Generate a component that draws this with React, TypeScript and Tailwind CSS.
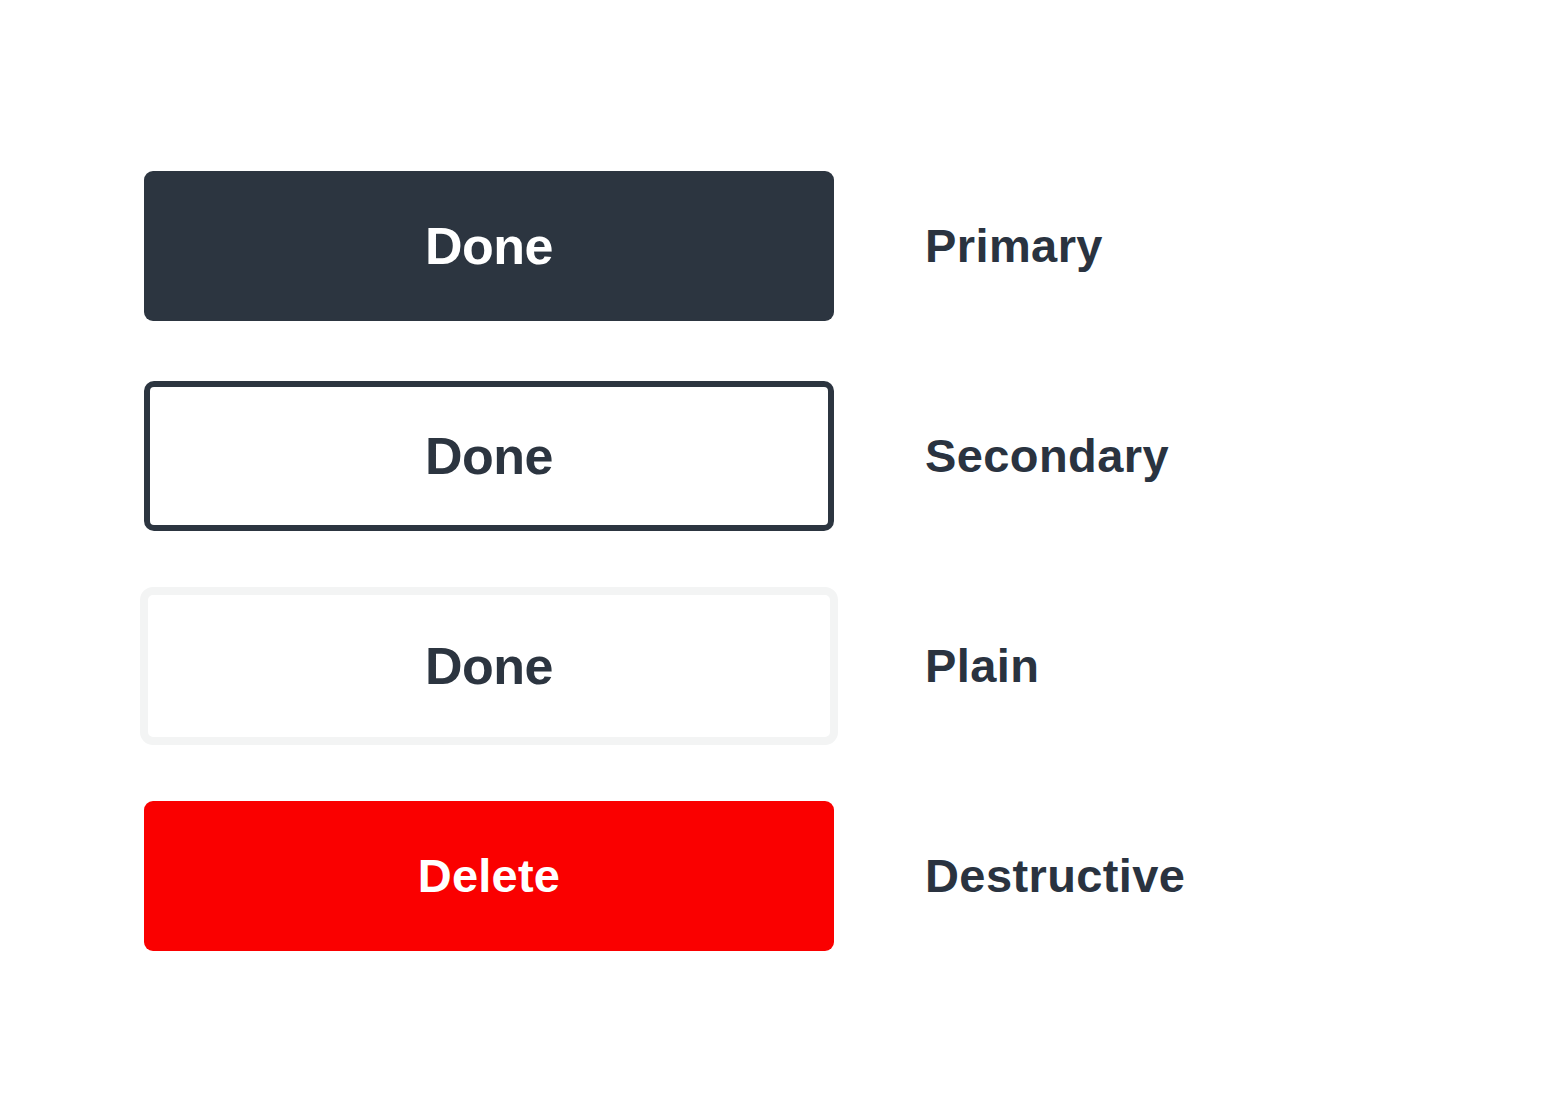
import React from 'react';

const font = { fontFamily: '"Liberation Sans", Arial, sans-serif' };

export default function App() {
  const rows = [
    { key: 'primary', label: 'Primary' },
    { key: 'secondary', label: 'Secondary' },
    { key: 'plain', label: 'Plain' },
    { key: 'destructive', label: 'Destructive' },
  ];

  const renderButton = (kind: string) => {
    if (kind === 'primary') {
      return (
        <button className="w-[690px] h-[150px] rounded-[9px] bg-[#2c3540] text-white text-[52px] font-bold tracking-[-0.5px]">
          Done
        </button>
      );
    }
    if (kind === 'secondary') {
      return (
        <button className="w-[690px] h-[150px] rounded-[10px] border-[6px] border-[#2c3540] bg-white text-[#2c3540] text-[52px] font-bold tracking-[-0.5px]">
          Done
        </button>
      );
    }
    if (kind === 'plain') {
      return (
        <button className="-m-[4px] w-[698px] h-[158px] rounded-[13px] border-[8px] border-[#f3f4f4] bg-white text-[#2c3540] text-[52px] font-bold tracking-[-0.5px]">
          Done
        </button>
      );
    }
    return (
      <button className="w-[690px] h-[150px] rounded-[9px] bg-[#fa0000] text-white text-[47px] font-bold tracking-[0.2px]">
        Delete
      </button>
    );
  };

  return (
    <div className="min-h-[1104px] w-full bg-white pt-[171px] pl-[144px]" style={font}>
      <div className="flex flex-col gap-[60px]">
        {rows.map((row) => (
          <div key={row.key} className="flex items-center">
            <div className="w-[690px] h-[150px] flex items-center justify-center">
              {renderButton(row.key)}
            </div>
            <div className="ml-[91px] text-[47px] font-bold tracking-[0.4px] text-[#2a3340]">{row.label}</div>
          </div>
        ))}
      </div>
    </div>
  );
}
